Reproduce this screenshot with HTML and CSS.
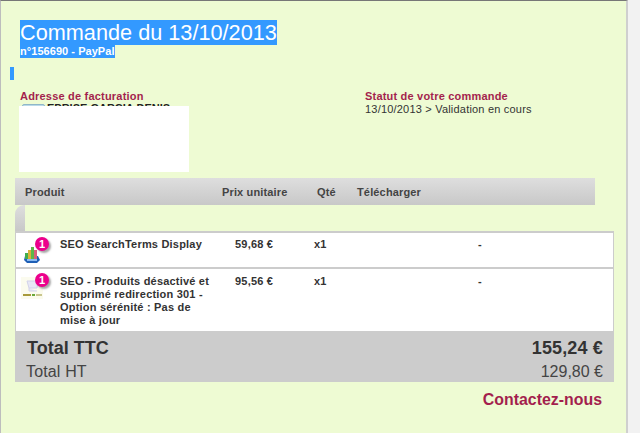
FILE: index.html
```html
<!DOCTYPE html>
<html lang="fr">
<head>
<meta charset="utf-8">
<title>Commande du 13/10/2013</title>
<link rel="stylesheet" href="styles.css">
</head>
<body>
<main class="panel">
  <header class="head">
    <h1 class="title"><span class="sel">Commande du 13/10/2013</span></h1>
    <p class="ref"><span class="sel">n°156690 - PayPal</span></p>
    <div class="caret"></div>
  </header>
  <section class="info">
    <div class="bill">
      <h2 class="label">Adresse de facturation</h2>
      <p class="addr"><span class="chip"></span>EPRISE GARCIA DENIS</p>
      <div class="mask"></div>
    </div>
    <div class="status">
      <h2 class="label">Statut de votre commande</h2>
      <p class="stat">13/10/2013 &gt; Validation en cours</p>
    </div>
  </section>
  <div class="thead">
    <span>Produit</span><span>Prix unitaire</span><span>Qté</span><span>Télécharger</span>
  </div>
  <div class="tabrow"><div class="tab"></div></div>
  <div class="tbody">
    <div class="row r1">
      <div class="thumb">
        <svg class="ico" width="16" height="18" viewBox="0 0 16 18">
          <path d="M1 11h13l2 4-3 3H3l-3-3z" fill="#1f5fb5"/>
          <rect x="1" y="8" width="3" height="6" fill="#3fae4d"/>
          <rect x="4" y="5" width="3" height="9" fill="#d9b23a"/>
          <rect x="7" y="2" width="3" height="12" fill="#5cb84a"/>
          <rect x="10" y="5" width="3" height="9" fill="#d9607a"/>
          <rect x="3" y="14" width="10" height="2" fill="#8abaf0"/>
        </svg>
        <b class="badge">1</b>
      </div>
      <div class="name">SEO SearchTerms Display</div>
      <div class="price">59,68 €</div>
      <div class="qty">x1</div>
      <div class="dash">-</div>
    </div>
    <div class="row r2">
      <div class="thumb">
        <svg class="ico2" width="22" height="22" viewBox="0 0 22 22">
          <rect width="22" height="22" fill="#fbfbee"/>
          <path d="M6 4h11l-1 7H8zM8 11v3h8" fill="#e8e8f6" stroke="#d2d2ea"/>
          <rect x="2" y="17" width="8" height="2" fill="#a89a3a"/>
          <rect x="11" y="17" width="3" height="2" fill="#6aa83a"/>
          <rect x="15" y="17" width="6" height="2" fill="#c9c68e"/>
        </svg>
        <b class="badge">1</b>
      </div>
      <div class="name">SEO - Produits désactivé et supprimé redirection 301 - Option sérénité : Pas de mise à jour</div>
      <div class="price">95,56 €</div>
      <div class="qty">x1</div>
      <div class="dash">-</div>
    </div>
  </div>
  <div class="totals">
    <div class="ttc"><span>Total TTC</span><span class="wide">155,24 €</span></div>
    <div class="ht"><span class="wide">Total HT</span><span>129,80 €</span></div>
  </div>
  <div class="contact"><a class="link" href="#">Contactez-nous</a></div>
</main>
</body>
</html>
```
FILE: styles.css
```css
* { box-sizing: border-box; }
html, body { margin: 0; padding: 0; }
body {
  width: 640px;
  height: 433px;
  overflow: hidden;
  background: #f2f2f2;
  font-family: "Liberation Sans", Arial, sans-serif;
  color: #333;
}
h1, h2, p { margin: 0; font-weight: normal; }
.panel {
  width: 628px;
  height: 433px;
  background: #eefbd3;
  border-left: 1px solid #bdbdbd;
  border-right: 2px solid #cfcfcf;
  border-top: 1px solid #777;
  overflow: hidden;
}
.sel { background: #3399ff; color: #fff; }
.head { padding: 19px 0 0 19px; height: 89px; position: relative; }
.title { font-size: 21.7px; line-height: 25px; }
.title .sel { display: inline-block; }
.ref { font-size: 11px; font-weight: bold; line-height: 13px; letter-spacing: .05px; }
.ref .sel { display: inline-block; }
.caret { width: 4px; height: 13px; background: #3399ff; margin: 9px 0 0 -10px; }
.info { display: flex; height: 88px; }
.bill { width: 364px; padding-left: 19px; position: relative; }
.status { flex: 1; }
.label { font-size: 11px; font-weight: bold; line-height: 13px; color: #a31f4d; letter-spacing: .2px; }
.addr { font-size: 11px; font-weight: bold; line-height: 13px; color: #222; margin-top: -1px; display: flex; gap: 2px; }
.chip { width: 23px; height: 5px; margin-top: 2px; margin-left: 2px; background: #b9d9e8; border: 1px solid #8fb7c9; border-radius: 2px 2px 0 0; }
.mask { position: absolute; left: 18px; top: 16px; width: 170px; height: 66px; background: #fff; }
.stat { font-size: 11px; line-height: 13px; color: #333; letter-spacing: .2px; }
.thead {
  display: grid;
  grid-template-columns: 197px 95px 40px 1fr;
  align-items: center;
  margin-left: 14px;
  width: 580px;
  height: 27px;
  padding-left: 10px;
  background: linear-gradient(#dedede, #c8c8c8);
  font-size: 11px;
  font-weight: bold;
  letter-spacing: .15px;
  color: #444;
}
.tabrow { height: 26px; padding-left: 14px; }
.tab {
  width: 10px;
  height: 26px;
  background: linear-gradient(#dedede, #c8c8c8);
  border-radius: 9px 0 0 0;
}
.tbody {
  margin-left: 14px;
  width: 599px;
  background: #fff;
  border: 1px solid #ccc;
  border-top-width: 2px;
  border-bottom: 0;
}
.row {
  display: grid;
  grid-template-columns: 44px 175px 79px 164px 1fr;
  font-size: 11px;
  font-weight: bold;
  line-height: 13px;
  letter-spacing: .2px;
  color: #333;
  border-bottom: 2px solid #ccc;
}
.r1 { height: 36px; }
.r2 { height: 64px; }
.r1 > div { padding-top: 5px; }
.r2 > div { padding-top: 6px; }
.thumb { position: relative; }
.ico { position: absolute; left: 8px; top: 12px; filter: blur(.5px); }
.ico2 { position: absolute; left: 5px; top: 8px; filter: blur(.4px); }
.badge {
  position: absolute;
  left: 19px;
  top: 4px;
  width: 14px;
  height: 14px;
  border-radius: 50%;
  background: #ec008c;
  color: #fff;
  font-size: 11px;
  line-height: 14px;
  text-align: center;
  letter-spacing: 0;
  box-shadow: 2px 2px 2px rgba(0,0,0,.35);
}
.name { width: 158px; }
.totals {
  margin-left: 14px;
  width: 599px;
  height: 50px;
  margin-top: -1px;
  padding: 0 11px 0 12px;
  background: #cccccc;
}
.ttc, .ht { display: flex; justify-content: space-between; }
.ttc { font-size: 18px; font-weight: bold; line-height: 31px; color: #333; padding-top: 1px; height: 31px; }
.ht { font-size: 16px; line-height: 17px; color: #444; margin-left: -1px; }
.wide { letter-spacing: .15px; }
.contact { width: 601px; text-align: right; padding-top: 9px; }
.link { font-size: 15.9px; line-height: 18px; font-weight: bold; color: #a31f4d; text-decoration: none; }
```
